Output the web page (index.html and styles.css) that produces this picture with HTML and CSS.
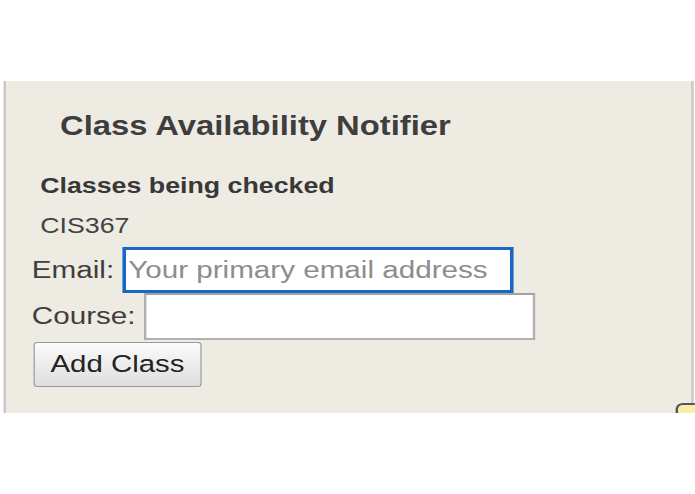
FILE: index.html
```html
<!DOCTYPE html>
<html lang="en">
<head>
<meta charset="utf-8">
<title>Class Availability Notifier</title>
<link rel="stylesheet" href="styles.css">
</head>
<body>
<div class="page">
  <div class="frame">
    <div class="panel">
      <h1 class="title">Class Availability Notifier</h1>
      <h4 class="section-head">Classes being checked</h4>
      <div class="class-item">CIS367</div>
      <form class="form">
        <div class="row">
          <label class="label" for="email">Email:</label>
          <input class="field focused" id="email" type="text" placeholder="Your primary email address">
        </div>
        <div class="row row-course">
          <label class="label" for="course">Course:</label>
          <input class="field" id="course" type="text">
        </div>
        <button class="btn" type="button">Add Class</button>
      </form>
    </div>
    <div class="note"></div>
  </div>
</div>
</body>
</html>
```

FILE: styles.css
```css
html, body {
  margin: 0;
  padding: 0;
  background: #ffffff;
}

.page {
  width: 579.2px;
  padding-top: 81px;
  transform: scaleX(1.2);
  transform-origin: 0 0;
  font-family: "Liberation Sans", Arial, sans-serif;
  color: #3c3c3c;
}

.frame {
  position: relative;
  height: 332px;
  overflow: hidden;
}

.panel {
  box-sizing: border-box;
  margin-left: 2.5px;
  width: 575px;
  height: 100%;
  background: #eeebe3;
  border-left: 2px solid #cbc9c3;
  border-right: 2px solid #cbc9c3;
  padding: 29px 0 0 22px;
}

.title {
  margin: 0 0 0 23.5px;
  font-size: 27.3px;
  line-height: 32px;
  font-weight: 700;
  color: #3e3e3e;
}

.section-head {
  margin: 31px 0 0 7px;
  font-size: 22.3px;
  line-height: 26px;
  font-weight: 700;
  color: #383838;
}

.class-item {
  margin: 14px 0 0 7px;
  font-size: 22.3px;
  line-height: 26px;
  color: #444444;
}

.form {
  margin: 7.6px 0 0 0;
}

.row {
  display: flex;
  align-items: center;
  gap: 7.2px;
  height: 46px;
}

.row-course {
  height: 47px;
}

.label {
  font-size: 24.7px;
  line-height: 28px;
  color: #3e3e3e;
}

.field {
  box-sizing: border-box;
  width: 325.8px;
  height: 100%;
  margin: 0;
  padding: 0 3px;
  font-family: "Liberation Sans", Arial, sans-serif;
  font-size: 24.7px;
  color: #222222;
  background: #ffffff;
  border: 2px solid #b0b0b0;
  border-top-color: #a2a2a2;
  border-radius: 0;
  outline: none;
}

.field.focused {
  border: 3px solid #1768c8;
  padding-left: 1.5px;
}

.field::placeholder {
  color: #8d8d8d;
}

.btn {
  display: block;
  box-sizing: border-box;
  width: 140.8px;
  height: 45px;
  margin: 2px 0 0 1px;
  padding: 0;
  font-family: "Liberation Sans", Arial, sans-serif;
  font-size: 24.5px;
  color: #222222;
  background: linear-gradient(#fbfbfb, #dedede);
  border: 1px solid #9b9b9b;
  border-radius: 3px;
}

.note {
  position: absolute;
  left: 563.3px;
  top: 322px;
  width: 24px;
  height: 24px;
  box-sizing: border-box;
  background: #fcecaa;
  border: 2px solid #555555;
  border-radius: 6px;
}
```
